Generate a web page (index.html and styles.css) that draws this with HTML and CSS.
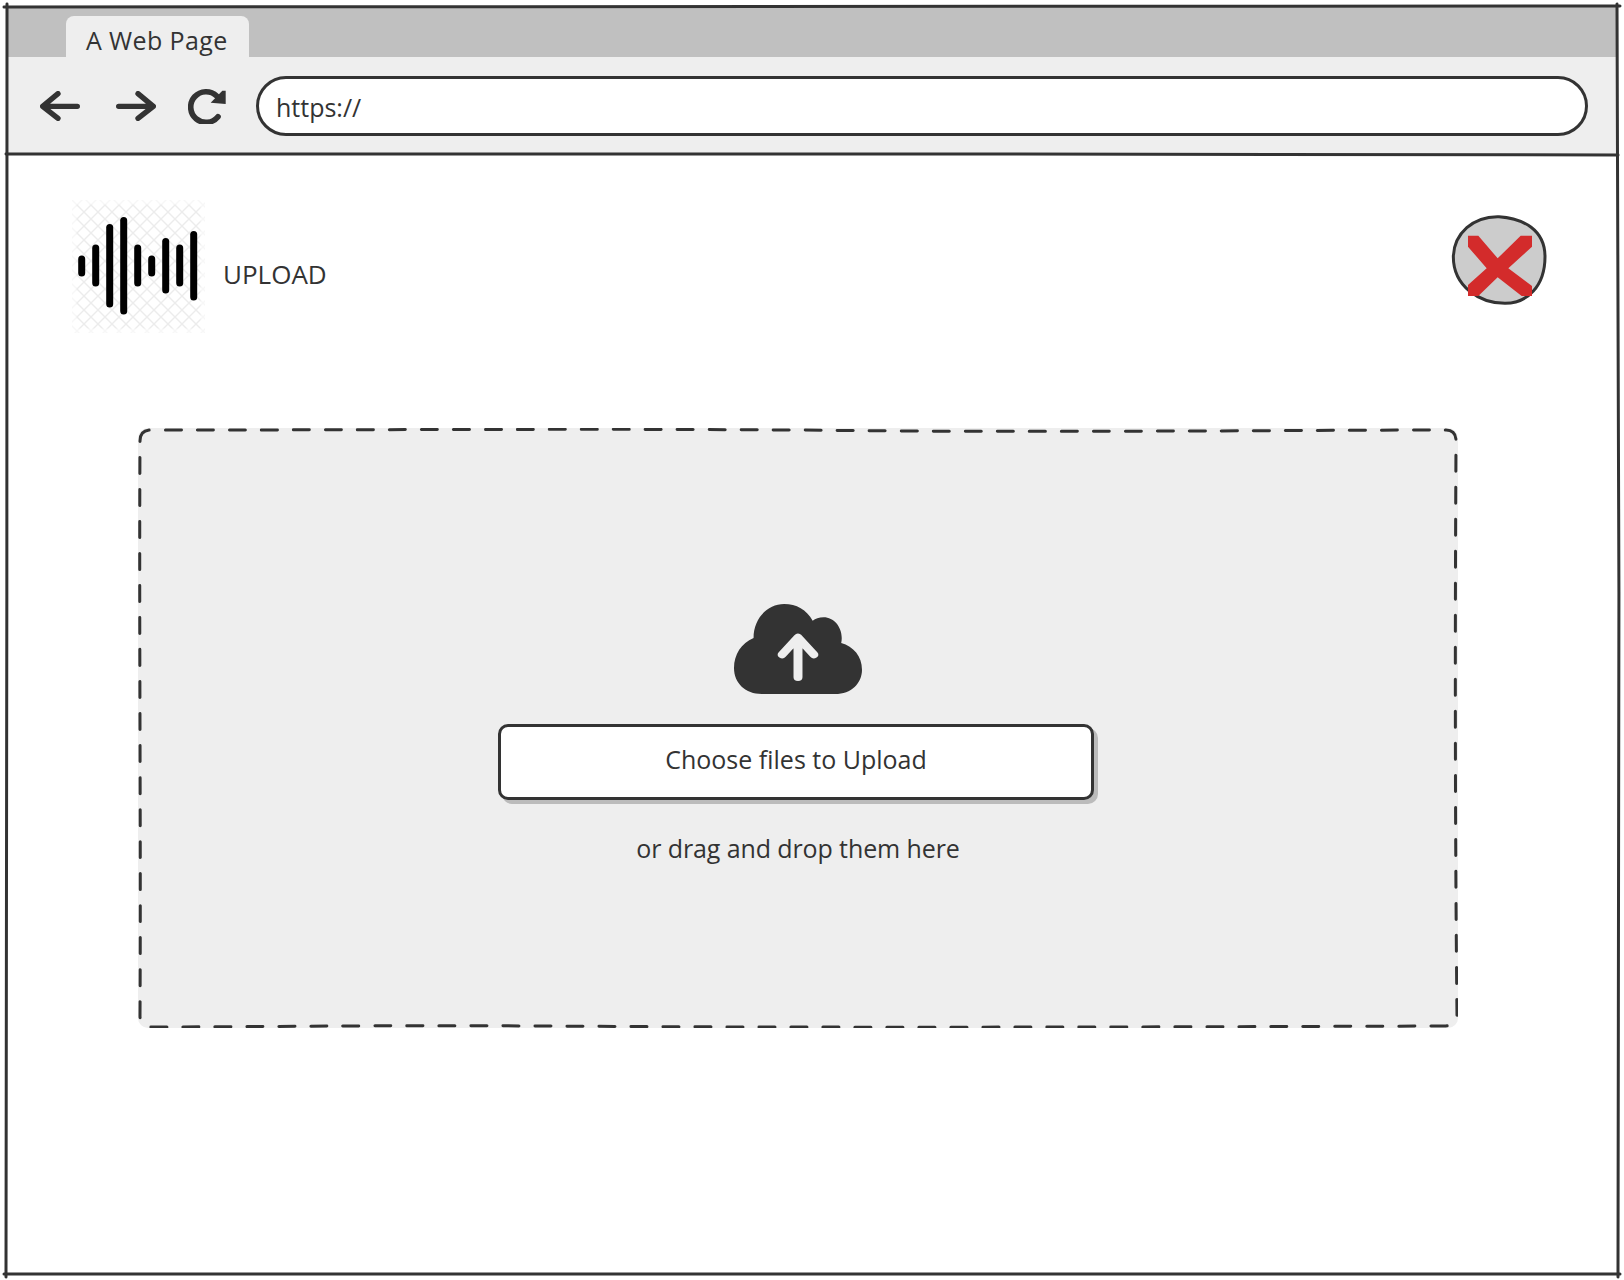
FILE: index.html
```html
<!DOCTYPE html>
<html>
<head>
  <title>A Web Page</title>
  <link rel="stylesheet" href="styles.css">
</head>
<body>
  <div class="window">
    <div class="tab-strip">
      <div class="tab">A Web Page</div>
    </div>

    <div class="toolbar">
      <svg class="nav-icon" viewBox="120 272 120 90" width="40" height="30">
        <path d="M232 318H128M174 280L128 318L174 354" fill="none" stroke="#333" stroke-width="16" stroke-linecap="round" stroke-linejoin="round"/>
      </svg>
      <svg class="nav-icon" viewBox="348 272 120 90" width="40" height="30">
        <path d="M356 318H460M414 280L460 318L414 354" fill="none" stroke="#333" stroke-width="16" stroke-linecap="round" stroke-linejoin="round"/>
      </svg>
      <svg class="nav-icon reload" viewBox="562 264 114 108" width="38" height="36">
        <path d="M652 350A46 46 0 1 1 648 288" fill="none" stroke="#333" stroke-width="17" stroke-linecap="round"/>
        <path d="M630 308L665 272H675V312Z" fill="#333"/>
      </svg>
      <div class="address">https://</div>
    </div>

    <div class="page">
      <div class="page-header">
        <svg class="logo" viewBox="0 0 137 137" width="137" height="137">
          <defs>
            <pattern id="lattice" width="14" height="14" patternUnits="userSpaceOnUse">
              <path d="M0 0L14 14M14 0L0 14" stroke="#ececec" stroke-width="1.4"/>
            </pattern>
          </defs>
          <rect x="2" y="2" width="133" height="133" fill="url(#lattice)"/>
          <rect x="4" y="4" width="129" height="129" fill="none" stroke="#fff" stroke-opacity="0.6" stroke-width="5"/>
          <g stroke="#000" stroke-width="7" stroke-linecap="round">
            <path d="M11.7 61V75"/>
            <path d="M25.7 50V85"/>
            <path d="M39.7 29.500V106"/>
            <path d="M53.700 22.500V113"/>
            <path d="M67.700 50V85"/>
            <path d="M81.700 61V75"/>
            <path d="M95.700 43.500V92"/>
            <path d="M109.700 50V85"/>
            <path d="M123.700 36.500V99"/>
          </g>
        </svg>
        <div class="page-title">UPLOAD</div>
        <svg class="close-btn" viewBox="60 42 300 276" width="100" height="92">
          <path d="M207 50C280 55 345 90 345 170C345 260 290 310 225 310C150 310 70 260 70 170C72 100 130 48 207 50Z" fill="#ccc" stroke="#333" stroke-width="9"/>
          <path d="M114 107H145L203 175L272 107H306V140L235 205L306 258V288H275L203 232L145 288H114V255L170 205L114 140Z" fill="#d32b2b"/>
        </svg>
      </div>

      <div class="dropzone">
        <svg class="dropzone-border" viewBox="0 0 1320 600" width="1320" height="600">
          <path d="M2 13Q2 2 13 2C300 2 500 0 760 3C1000 4 1200 2 1308 2Q1318 2 1318 13C1317 200 1317 400 1319 588Q1318 598 1306 598C1000 599 700 600 400 598C250 597 100 599 14 599Q2 599 2 588C3 400 1 200 2 13Z" fill="none" stroke="#333" stroke-width="3" stroke-linecap="round" stroke-dasharray="16 16"/>
        </svg>
        <svg class="cloud" viewBox="622 38 314 270" width="128" height="90" preserveAspectRatio="none">
          <path d="M690 308H870C910 308 936 275 936 235C936 195 915 165 885 155C892 115 870 78 842 78C830 78 822 82 815 88C800 55 775 38 745 38C705 38 670 80 670 140C640 155 622 190 622 230C622 275 650 308 690 308Z" fill="#333"/>
          <path d="M779 258V140M740 190L779 138L818 190" fill="none" stroke="#eee" stroke-width="22" stroke-linecap="round" stroke-linejoin="round"/>
        </svg>
        <button class="choose-btn">Choose files to Upload</button>
        <div class="drop-hint">or drag and drop them here</div>
      </div>
    </div>

    <!-- hand drawn window outline -->
    <svg class="frame" viewBox="0 0 1624 1280" width="1624" height="1280">
      <g fill="none" stroke="#333" stroke-width="3" stroke-linecap="round">
        <path d="M4 7C400 8 900 5 1620 6"/>
        <path d="M7 4C6 400 8 900 6 1277"/>
        <path d="M1617 4C1619 400 1620 900 1618 1277"/>
        <path d="M4 1274C500 1273 1000 1275 1620 1274"/>
        <path d="M6 154C300 153 700 155 1000 154C1300 154 1500 153 1618 155"/>
      </g>
    </svg>
  </div>
</body>
</html>
```

FILE: styles.css
```css
body {
  margin: 0;
  background-color: #ffffff;
  color: #333333;
  font-family: "Open Sans", Lato, sans-serif;
  font-size: 25px;
}

.window {
  position: relative;
  box-sizing: border-box;
  height: 1280px;
  padding: 6px 6px 0;
  overflow: hidden;
}

.frame {
  position: absolute;
  top: 0;
  left: 0;
  pointer-events: none;
}

.tab-strip {
  display: flex;
  align-items: flex-end;
  height: 51px;
  padding-left: 60px;
  background-color: #c0c0c0;
}

.tab {
  width: 183px;
  height: 41px;
  box-sizing: border-box;
  padding-left: 20px;
  line-height: 48px;
  letter-spacing: 0.4px;
  background-color: #eeeeee;
  border-radius: 8px 8px 0 0;
}

.toolbar {
  display: flex;
  align-items: center;
  box-sizing: border-box;
  height: 97px;
  padding: 1px 30px 0 34px;
  background-color: #eeeeee;
}

.nav-icon {
  margin-right: 36px;
  flex-shrink: 0;
}

.reload {
  margin-left: -4px;
  margin-right: 30px;
}

.address {
  flex: 1;
  box-sizing: border-box;
  height: 60px;
  padding-left: 17px;
  line-height: 56px;
  background-color: #ffffff;
  border: 3px solid #333333;
  border-radius: 30px;
}

.page-header {
  display: flex;
  padding: 44px 68px 0 64px;
}

.logo {
  flex-shrink: 0;
}

.page-title {
  flex: 1;
  margin-left: 16px;
  align-self: center;
  margin-top: 14px;
  font-size: 26px;
}

.close-btn {
  margin-top: 16px;
}

.dropzone {
  position: relative;
  display: flex;
  flex-direction: column;
  align-items: center;
  box-sizing: border-box;
  width: 1320px;
  height: 600px;
  margin: 93px 0 0 132px;
  padding-top: 176px;
  background-color: #eeeeee;
  border-radius: 10px;
}

.dropzone-border {
  position: absolute;
  top: 0;
  left: 0;
}

.choose-btn {
  width: 596px;
  height: 76px;
  margin: 30px 4px 0 0;
  padding: 0 0 6px;
  color: #333333;
  font-family: inherit;
  font-size: 25px;
  background-color: #ffffff;
  border: 3px solid #333333;
  border-radius: 10px;
  box-shadow: 4px 4px 0 #bbbbbb;
}

.drop-hint {
  margin-top: 31px;
  letter-spacing: -0.1px;
}
```
